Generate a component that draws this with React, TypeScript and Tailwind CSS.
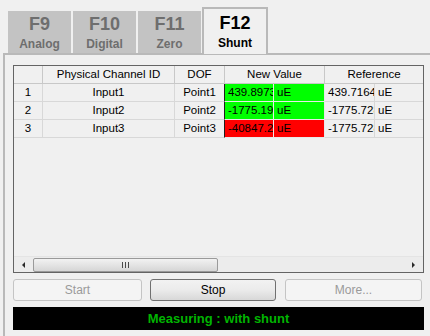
import React from "react";

type Row = {
  n: string;
  id: string;
  dof: string;
  val: string;
  ref: string;
  bg: string;
};

const rows: Row[] = [
  { n: "1", id: "Input1", dof: "Point1", val: "439.8973", ref: "439.7164", bg: "bg-[#00ff00]" },
  { n: "2", id: "Input2", dof: "Point2", val: "-1775.190", ref: "-1775.728", bg: "bg-[#00ff00]" },
  { n: "3", id: "Input3", dof: "Point3", val: "-40847.2", ref: "-1775.728", bg: "bg-[#ff0000]" },
];

const Tab = ({ k, label }: { k: string; label: string }) => (
  <div className="flex h-[42px] w-[63px] flex-col items-center bg-[#c3c3c3] pt-[3px] font-bold text-[#6e6e6e]">
    <span className="text-[18px] leading-[20px]">{k}</span>
    <span className="mt-[3px] text-[12px] leading-[14px]">{label}</span>
  </div>
);

const App = () => {
  return (
    <div className="h-[336px] w-[430px] overflow-hidden bg-[#f0f0f0] font-['Liberation_Sans',Arial,sans-serif] text-[11px] text-black">
      {/* Tabs */}
      <div className="flex items-end gap-[2px] pl-[8px] pt-[7px]">
        <Tab k="F9" label="Analog" />
        <Tab k="F10" label="Digital" />
        <Tab k="F11" label="Zero" />
        <div className="relative z-10 -mb-px ml-[-1px] flex h-[47px] w-[66px] flex-col items-center border-2 border-b-0 border-[#b9b9b9] bg-[#f0f0f0] pt-[4px] font-bold">
          <span className="text-[18px] leading-[20px]">F12</span>
          <span className="mt-[3px] text-[12px] leading-[14px]">Shunt</span>
        </div>
      </div>

      {/* Panel */}
      <div className="ml-[3px] h-[300px] border-l-2 border-t-2 border-[#b9b9b9] pl-[8px] pt-[10px]">
        {/* Grid */}
        <div className="flex h-[208px] w-[411px] flex-col border border-[#646464] bg-[#f0f0f0]">
          <div className="grid grid-cols-[29px_132px_50px_49px_51px_50px_48px] text-[11.5px]">
            <div className="h-[18px] border-b border-r border-[#c8c8c8]" />
            <div className="flex h-[18px] items-center justify-center border-b border-r border-[#c8c8c8]">Physical Channel ID</div>
            <div className="flex h-[18px] items-center justify-center border-b border-r border-[#c8c8c8]">DOF</div>
            <div className="col-span-2 flex h-[18px] items-center justify-center border-b border-r border-[#c8c8c8]">New Value</div>
            <div className="col-span-2 flex h-[18px] items-center justify-center border-b border-[#c8c8c8]">Reference</div>
            {rows.map((r) => (
              <React.Fragment key={r.n}>
                <div className="flex h-[18px] items-center justify-center border-b border-r border-[#d8d8d8]">{r.n}</div>
                <div className="flex h-[18px] items-center justify-center border-b border-r border-[#d8d8d8]">{r.id}</div>
                <div className="flex h-[18px] items-center justify-center border-b border-r border-[#d8d8d8] border-r-[#202020]">{r.dof}</div>
                <div className={`flex h-[18px] items-center overflow-hidden whitespace-nowrap border-b border-r border-[#e8e8e8] pl-[3px] ${r.bg}`}>{r.val}</div>
                <div className={`flex h-[18px] items-center border-b border-r border-[#e8e8e8] pl-[3px] ${r.bg}`}>uE</div>
                <div className="flex h-[18px] items-center overflow-hidden whitespace-nowrap border-b border-r border-[#d8d8d8] pl-[3px]">{r.ref}</div>
                <div className="flex h-[18px] items-center border-b border-[#d8d8d8] pl-[3px]">uE</div>
              </React.Fragment>
            ))}
          </div>
          <div className="flex-1" />
          {/* Horizontal scrollbar */}
          <div className="flex h-[16px] items-center border-t border-[#e4e4e4] bg-[#ececec] px-[3px]">
            <svg width="14" height="14" viewBox="0 0 14 14">
              <path d="M5 7 L8 4 L8 10 Z" fill="#2a2a2a" />
            </svg>
            <div className="ml-[2px] flex h-[14px] w-[185px] items-center justify-center rounded-[2px] border border-[#9a9a9a] bg-gradient-to-b from-[#f2f2f2] to-[#d6d6d6]">
              <div className="flex gap-[2px]">
                <div className="h-[6px] w-px bg-[#4a4a4a]" />
                <div className="h-[6px] w-px bg-[#4a4a4a]" />
                <div className="h-[6px] w-px bg-[#4a4a4a]" />
              </div>
            </div>
            <div className="flex-1" />
            <svg width="14" height="14" viewBox="0 0 14 14">
              <path d="M6 4 L9 7 L6 10 Z" fill="#2a2a2a" />
            </svg>
          </div>
        </div>

        {/* Buttons */}
        <div className="mt-[6px] flex w-[411px] text-[12px]">
          <button className="h-[22px] w-[129px] rounded-[3px] border border-[#c4c4c4] bg-[#f4f4f4] text-[#9a9a9a]">Start</button>
          <button className="ml-[8px] h-[22px] w-[126px] rounded-[3px] border border-[#707070] bg-gradient-to-b from-[#f2f2f2] via-[#ebebeb] to-[#d8d8d8] text-black">Stop</button>
          <button className="ml-[9px] h-[22px] w-[137px] rounded-[3px] border border-[#c4c4c4] bg-[#f4f4f4] text-[#9a9a9a]">More...</button>
        </div>

        {/* Status */}
        <div className="mt-[6px] flex h-[23px] w-[411px] items-center justify-center bg-black text-[13px] font-bold text-[#00b400]">
          Measuring : with shunt
        </div>
      </div>
    </div>
  );
};

export default App;
